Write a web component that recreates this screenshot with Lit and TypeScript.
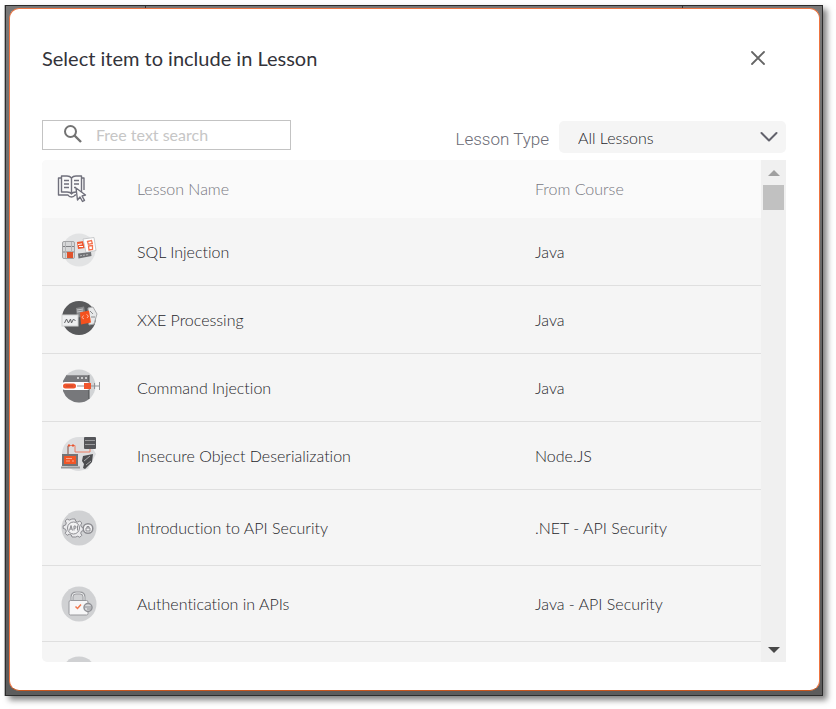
import { LitElement, html, css, svg, nothing } from "lit";
import { customElement, property } from "lit/decorators.js";

type IconName = "sql" | "xxe" | "command" | "deserialize" | "api" | "auth" | "plain";

interface Lesson {
  icon: IconName;
  name: string;
  course: string;
  tall?: boolean;
}

const LESSONS: Lesson[] = [
  { icon: "sql", name: "SQL Injection", course: "Java" },
  { icon: "xxe", name: "XXE Processing", course: "Java" },
  { icon: "command", name: "Command Injection", course: "Java" },
  { icon: "deserialize", name: "Insecure Object Deserialization", course: "Node.JS" },
  { icon: "api", name: "Introduction to API Security", course: ".NET - API Security", tall: true },
  { icon: "auth", name: "Authentication in APIs", course: "Java - API Security", tall: true },
  { icon: "plain", name: "", course: "" },
];

/* Every drawing shares a 44x36 box whose disc is centred on (20, 18). */
const ART = {
  sql: svg`
    <circle cx="20" cy="18" r="16.5" fill="#e2e3e4"/>
    <rect x="3.500" y="9.500" width="12" height="17" rx="1.500" fill="#d6d7d8" stroke="#a3a4a6"/>
    <path d="M4 14.500h11M4 20h11" stroke="#808184"/>
    <path d="M6.500 10v16M12.500 10v10" stroke="#b4b5b7"/>
    <rect x="8" y="20" width="6" height="6" fill="#e0532c"/>
    <path d="M18 10l7-1 1 7-7 1z" fill="#f0562d"/>
    <path d="M19 12.500l4-.6M20 14.500h4" stroke="#fff"/>
    <path d="M24 7l11-1.500 2 13-10 2z" fill="#fff" stroke="#c9cacc"/>
    <path d="M28.500 9.500l4-1 .8 3-4 .8zM29.500 14l4-.5v4l-3.500.5z" fill="none" stroke="#f4714e" stroke-width="1.300"/>
    <path d="M19 21.500l13-1.500.5 4-13 2.500z" fill="#707174"/>
    <path d="M21 23.800l9-1.300" stroke="#b7b8ba" stroke-dasharray="2 1"/>`,
  xxe: svg`
    <circle cx="20" cy="18" r="17" fill="#58595b"/>
    <path d="M17 8l8-1.500 2 10-9 1z" fill="#88898b"/>
    <path d="M18 10l6-1M18 12l6-1" stroke="#c6c7c9"/>
    <path d="M29 8l5-1 4 7-3 10-5 1z" fill="#e7e8e9" stroke="#a8a9ab"/>
    <path d="M31 11l3 3M32 17h4" stroke="#8b8c8e"/>
    <rect x="3" y="15" width="16" height="11" fill="#eeeff0" stroke="#d2d3d4"/>
    <path d="M5.500 23l2-4 2 4 2-4 1 4 2-4 2 2" fill="none" stroke="#606164"/>
    <path d="M21 12.500l9-2 2 12-10 2z" fill="#f4511e"/>
    <path d="M24.500 15.500l-1.500 2 2 1.500M27.500 14.500l2 1.500-1.500 2" fill="none" stroke="#ffb79e"/>`,
  command: svg`
    <circle cx="20" cy="18" r="16.500" fill="#d2d4d6"/>
    <path d="M7 8H30V31Q26 34.500 20 34.500Q8 34 4 23V13z" fill="#77787b"/>
    <path d="M7 7.500H30" stroke="#8e8f92"/>
    <path d="M18 10h2M22 10h2M26 10h2" stroke="#e7e8e9" stroke-width="1.500"/>
    <path d="M30 7v24" stroke="#4d4e51"/>
    <rect x="3" y="14" width="28" height="8" rx="3" fill="#fff"/>
    <rect x="4" y="15.500" width="13" height="5" rx="2.500" fill="#f0562d"/>
    <path d="M7 18h7" stroke="#c9472a"/>
    <path d="M18 18h7" stroke="#8f9092"/>
    <rect x="25" y="15" width="7" height="6" fill="#f0562d"/>
    <path d="M32 18h9M35.500 15v6M40.500 14v8" stroke="#929396"/>`,
  deserialize: svg`
    <path d="M20 1A17 17 0 0 0 20 35z" fill="#dcdddf"/>
    <path d="M20 1h7l10 17-8 15-9 2z" fill="#dcdddf"/>
    <rect x="25" y="1" width="12" height="12" rx="1" fill="#55565a"/>
    <path d="M26 4.500h10M26 8.500h10" stroke="#9a9b9e"/>
    <path d="M9 19V9.500h7V16h15v-3" fill="none" stroke="#eb7d62"/>
    <path d="M9 19v-9" stroke="#77787b"/>
    <rect x="9" y="8.500" width="2" height="2" fill="#e5532f"/>
    <rect x="13" y="8.500" width="2" height="2" fill="#e5532f"/>
    <rect x="3" y="18" width="16" height="12" fill="#737477"/>
    <rect x="5" y="20" width="12" height="8" fill="#f15627"/>
    <path d="M7 22.500h6M7 25h4M13 25h2" stroke="#ffa68b"/>
    <path d="M2 31.500h19" stroke="#98999b" stroke-width="2"/>
    <path d="M24 20l10-2-1 8-7 7-2-1 1-4-2-3z" fill="#4c4d50"/>
    <path d="M25 25l6-5M27 29l5-4" stroke="#a9aaac"/>`,
  api: svg`
    <circle cx="20" cy="18" r="17.500" fill="#d0d1d3"/>
    <g fill="#f2f2f3" stroke="#8c8c91">
      <path d="M13 9h3l.7 2.300 2 .8 2.100-1.100 2 2-1.100 2 .8 2.100 2.300.7v2.600l-2.300.8-.8 2 1.100 2.100-2 2-2.100-1.100-2 .8L16 27h-3l-.7-2-2-.8-2.100 1.100-2-2 1.100-2.100-.8-2-2.300-.8v-2.600l2.300-.7.8-2.100-1.100-2 2-2 2.100 1.100 2-.8z" fill="#eaeaec"/>
      <circle cx="14.500" cy="18" r="6"/>
      <path d="M10.500 20.500l1.500-5 1.500 5M11 19h2M15 20.500v-4.500h1.500q1 1 0 2.300H15M18.500 15.500v5" fill="none"/>
      <circle cx="29" cy="18.500" r="4.800" stroke-width="1.500"/>
      <path d="M27 18h4v3h-4zM28 18v-1.500h2V18" fill="none"/>
    </g>`,
  auth: svg`
    <circle cx="20" cy="18" r="17.500" fill="#d0d1d3"/>
    <path d="M13 15v-4q0-4 4-4h4q4 0 4 4v4" fill="none" stroke="#9b9ca0" stroke-width="3"/>
    <path d="M13 15v-4q0-4 4-4h4q4 0 4 4v4" fill="none" stroke="#e9eaeb"/>
    <rect x="10" y="14.500" width="19" height="14.500" rx="1.500" fill="#f7f7f8" stroke="#98999d"/>
    <path d="M16.500 20.500l2 2 3.500-4" fill="none" stroke="#f0794f" stroke-width="1.500"/>
    <circle cx="29" cy="21.500" r="4" fill="#d9dadc" stroke="#8f9095" stroke-width="1.500"/>
    <path d="M26 21h6M28 23h4" stroke="#8f9095"/>`,
  plain: svg`<circle cx="20" cy="18" r="17.500" fill="#d0d1d3"/>`,
};

@customElement("lesson-icon")
export class LessonIcon extends LitElement {
  @property() name: IconName = "plain";

  static styles = css`
    :host {
      display: block;
    }
    .art {
      display: block;
      width: 44px;
      height: 36px;
    }
  `;

  render() {
    return html`<svg class="art" viewBox="0 0 44 36" fill="none" aria-hidden="true">${ART[this.name]}</svg>`;
  }
}

@customElement("app-root")
export class AppRoot extends LitElement {
  static styles = css`
    :host {
      display: flex;
      box-sizing: border-box;
      height: 100vh;
      padding: 5px 13px 13px 5px;
      background: #fff;
      color: #26262b;
      font: 300 16px/20px Lato, "Open Sans", sans-serif;
      font-variant-ligatures: none;
    }
    * {
      box-sizing: border-box;
    }
    .backdrop {
      flex: 1;
      display: flex;
      min-width: 0;
      padding: 2px 2px 4px 3px;
      border: 1px solid #2b2b2b;
      background:
        linear-gradient(#333, #333) 17% 0 / 1px 2px no-repeat,
        linear-gradient(#333, #333) 83% 0 / 1px 2px no-repeat,
        linear-gradient(#787878, #5c5c5c 80%);
      box-shadow: 4px 4px 6px rgba(0, 0, 0, 0.5), -1px 0 0 #bbb;
    }
    .dialog {
      flex: 1;
      display: flex;
      flex-direction: column;
      min-width: 0;
      padding: 35px 33px 28px 32px;
      border: 1px solid #ee7440;
      border-bottom-color: #c9571f;
      border-radius: 10px;
      background: #fff;
    }
    .head,
    .filters {
      display: flex;
      justify-content: space-between;
    }
    .head {
      align-items: center;
      padding-right: 20px;
      margin-bottom: 48px;
    }
    .title {
      margin: 0;
      color: #33333a;
      font-size: 20px;
      font-weight: 400;
      line-height: 28px;
    }
    .close {
      display: block;
      width: 16px;
      height: 16px;
      padding: 0;
      border: 0;
      background: none;
      cursor: pointer;
    }
    .glyph {
      display: block;
    }
    .filters {
      align-items: flex-start;
      height: 40px;
    }
    .search {
      display: flex;
      align-items: center;
      gap: 13px;
      width: 249px;
      height: 30px;
      padding-left: 20px;
      border: 1px solid #c3c3c3;
    }
    .query {
      flex: 1;
      min-width: 0;
      padding: 0;
      border: 0;
      outline: 0;
      background: none;
      color: #26262b;
      font: 400 16px/20px Lato, sans-serif;
    }
    .query::placeholder {
      color: #c6c6c6;
      opacity: 1;
    }
    .type {
      display: flex;
      align-items: center;
      gap: 10px;
      padding-top: 1px;
    }
    .label {
      padding-top: 4px;
      color: #6c6c76;
      font: 300 17px/20px Roboto, sans-serif;
    }
    .picker {
      display: grid;
      align-items: center;
      width: 227px;
      height: 32px;
      border-radius: 5px;
      background: #f5f5f5;
    }
    .choice {
      grid-area: 1 / 1;
      width: 100%;
      height: 32px;
      padding: 2px 40px 0 19px;
      border: 0;
      appearance: none;
      background: none;
      color: #26262b;
      font: 300 16px/20px Lato, sans-serif;
    }
    .chevron {
      grid-area: 1 / 1;
      justify-self: end;
      margin-right: 8px;
      pointer-events: none;
    }
    .panel {
      flex: 1;
      display: flex;
      min-height: 0;
      overflow: hidden;
      border-radius: 5px 0 0 5px;
      background: #f5f5f5;
    }
    .rows {
      flex: 1;
      min-width: 0;
      overflow: hidden;
    }
    .lessons {
      width: 100%;
      border-collapse: separate;
      border-spacing: 0;
      table-layout: fixed;
    }
    .col-icon {
      width: 95px;
    }
    .col-name {
      width: 398px;
    }
    .lessons th,
    .lessons td {
      padding: 0;
      text-align: left;
      font-weight: 300;
    }
    .lessons th {
      height: 58px;
      background: #fafafa;
      color: #77777f;
    }
    .lessons td {
      height: 68px;
      border-bottom: 1px solid #dfdfdf;
    }
    .lessons .tall td {
      height: 76px;
    }
    .lessons .pic {
      padding: 0 0 4px 17px;
    }
    .lessons .tall .pic {
      padding-bottom: 0;
    }
    .lessons .book {
      padding-left: 15px;
    }
    .scroll {
      display: flex;
      flex-direction: column;
      align-items: center;
      width: 25px;
      padding: 10px 2px 9px;
      background: #f0f0f0;
    }
    .thumb {
      width: 21px;
      height: 25px;
      margin-top: 9px;
      background: #c1c1c1;
    }
    .down {
      margin-top: auto;
    }
  `;

  private row(lesson: Lesson) {
    return html`<tr class=${lesson.tall ? "tall" : nothing}>
      <td class="pic"><lesson-icon name=${lesson.icon}></lesson-icon></td>
      <td>${lesson.name}</td>
      <td>${lesson.course}</td>
    </tr>`;
  }

  render() {
    return html`
      <div class="backdrop">
        <section class="dialog" role="dialog" aria-labelledby="title">
          <header class="head">
            <h1 class="title" id="title">Select item to include in Lesson</h1>
            <button class="close" type="button" aria-label="Close">
              <svg class="glyph" width="16" height="16" viewBox="0 0 16 16" fill="none" stroke="#656565" stroke-width="1.800" stroke-linecap="round">
                <path d="M2 2l12 12M14 2L2 14" />
              </svg>
            </button>
          </header>

          <div class="filters">
            <label class="search">
              <svg class="glyph" width="20" height="20" viewBox="0 0 20 20" fill="none" stroke="#737373" stroke-width="2">
                <circle cx="7.500" cy="6.500" r="5.500" />
                <path d="M11.500 10.500l6.500 6.500" stroke-width="2.400" />
              </svg>
              <input class="query" type="text" placeholder="Free text search" aria-label="Free text search" />
            </label>
            <div class="type">
              <label class="label" for="type">Lesson Type</label>
              <div class="picker">
                <select class="choice" id="type">
                  <option>All Lessons</option>
                </select>
                <svg class="chevron" width="18" height="12" viewBox="0 0 18 12" fill="none" stroke="#62626c" stroke-width="2" stroke-linecap="round" stroke-linejoin="round">
                  <path d="M1.500 2L9 9.500 16.500 2" />
                </svg>
              </div>
            </div>
          </div>

          <div class="panel">
            <div class="rows">
              <table class="lessons">
                <colgroup>
                  <col class="col-icon" />
                  <col class="col-name" />
                  <col />
                </colgroup>
                <thead>
                  <tr>
                    <th class="book" aria-label="Lesson">
                      <svg class="glyph" width="30" height="28" viewBox="0 0 30 28" fill="none" stroke="#70707c" stroke-width="1.400" stroke-linejoin="round">
                        <path d="M14.500 3Q13 1 10 1H4.500V17H10q3.500 0 4.500 2 1-2 4.500-2H24.500V1H19q-3 0-4.500 2zV18" />
                        <path d="M4.500 3H1.500V20H11q1 2 3.500 2t3.500-2H19M24.500 3H27V15" />
                        <path d="M7 5.500h5M7 9h5M7 12.500h5M17 5.500h5M17 9h5M17 12.500h2" />
                        <path d="M19 13l1.500 12 2.500-3 2.500 4.500 2-1.200-2.500-4.300 3.500-1z" fill="#fafafa" />
                      </svg>
                    </th>
                    <th>Lesson Name</th>
                    <th>From Course</th>
                  </tr>
                </thead>
                <tbody>
                  ${LESSONS.map((lesson) => this.row(lesson))}
                </tbody>
              </table>
            </div>
            <div class="scroll" aria-hidden="true">
              <svg class="glyph" width="12" height="6" viewBox="0 0 12 6" fill="#a0a0a0"><path d="M0 6L6 0l6 6z" /></svg>
              <div class="thumb"></div>
              <svg class="glyph down" width="12" height="6" viewBox="0 0 12 6" fill="#484848"><path d="M0 0h12L6 6z" /></svg>
            </div>
          </div>
        </section>
      </div>
    `;
  }
}
